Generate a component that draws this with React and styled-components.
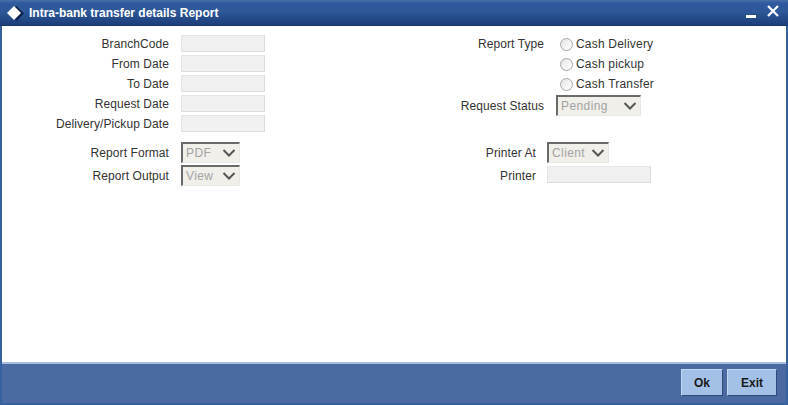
import React from "react";
import styled, { createGlobalStyle } from "styled-components";

const GlobalStyle = createGlobalStyle`
  html, body {
    margin: 0;
    padding: 0;
    background: #fff;
  }
  body {
    font-family: "Liberation Sans", Arial, sans-serif;
    font-size: 12px;
    color: #333;
  }
`;

const App = () => {
  return (
    <>
      <GlobalStyle />
      <Window>
        <TitleBar>
          <TitleIcon viewBox="0 0 20 18">
            <path d="M10.5 1 L18 8.5 L10.5 16 L3 8.5 Z" fill="#0d2350" />
            <path d="M8 1 L15 8 L8 15 L1 8 Z" fill="#fff" />
          </TitleIcon>
          <Title>Intra-bank transfer details Report</Title>
          <WindowControls>
            <svg width="10" height="4" viewBox="0 0 10 4">
              <rect width="10" height="3" y="1" fill="#fff" />
            </svg>
            <svg width="12" height="12" viewBox="0 0 12 12">
              <path d="M1 1 L11 11 M11 1 L1 11" stroke="#fff" strokeWidth="2.2" fill="none" />
            </svg>
          </WindowControls>
        </TitleBar>

        <Content>
          <TopSection>
            <Column>
              <Row>
                <Label $width={167}>BranchCode</Label>
                <Field />
              </Row>
              <Row>
                <Label $width={167}>From Date</Label>
                <Field />
              </Row>
              <Row>
                <Label $width={167}>To Date</Label>
                <Field />
              </Row>
              <Row>
                <Label $width={167}>Request Date</Label>
                <Field />
              </Row>
              <Row>
                <Label $width={167}>Delivery/Pickup Date</Label>
                <Field />
              </Row>
            </Column>

            <RightColumn>
              <Row>
                <Label $width={144}>Report Type</Label>
                <RadioOption>
                  <Radio type="radio" name="reportType" disabled />
                  Cash Delivery
                </RadioOption>
              </Row>
              <Row>
                <Label $width={144} />
                <RadioOption>
                  <Radio type="radio" name="reportType" disabled />
                  Cash pickup
                </RadioOption>
              </Row>
              <Row>
                <Label $width={144} />
                <RadioOption>
                  <Radio type="radio" name="reportType" disabled />
                  Cash Transfer
                </RadioOption>
              </Row>
              <StatusRow>
                <Label $width={144}>Request Status</Label>
                <SelectBox $width={85}>
                  Pending
                  <Chevron />
                </SelectBox>
              </StatusRow>
            </RightColumn>
          </TopSection>

          <BottomSection>
            <Column>
              <SelectRow>
                <Label $width={167}>Report Format</Label>
                <SelectBox $width={59}>
                  PDF
                  <Chevron />
                </SelectBox>
              </SelectRow>
              <SelectRow>
                <Label $width={167}>Report Output</Label>
                <SelectBox $width={59}>
                  View
                  <Chevron />
                </SelectBox>
              </SelectRow>
            </Column>

            <PrinterColumn>
              <SelectRow>
                <Label $width={136} $gap={11}>Printer At</Label>
                <SelectBox $width={62}>
                  Client
                  <Chevron />
                </SelectBox>
              </SelectRow>
              <SelectRow>
                <Label $width={136} $gap={11}>Printer</Label>
                <PrinterField $width={104} />
              </SelectRow>
            </PrinterColumn>
          </BottomSection>
        </Content>

        <Footer>
          <FooterButton $width={42}>Ok</FooterButton>
          <FooterButton $width={50}>Exit</FooterButton>
        </Footer>
      </Window>
    </>
  );
};

const Chevron = () => (
  <ChevronIcon viewBox="0 0 14 8">
    <path d="M1.5 1 L7 6.5 L12.5 1" fill="none" stroke="#555" strokeWidth="2" />
  </ChevronIcon>
);

const Window = styled.div`
  box-sizing: border-box;
  width: 788px;
  height: 405px;
  display: flex;
  flex-direction: column;
  background: #fff;
  border-left: 2px solid #37609f;
  border-right: 2px solid #37609f;
  border-bottom: 2px solid #37609f;
`;

const TitleBar = styled.div`
  box-sizing: border-box;
  height: 26px;
  margin: 0 -2px;
  padding: 0 9px 0 6px;
  display: flex;
  align-items: center;
  background: linear-gradient(to bottom, #4a6fa8 0, #2f5a9e 3px, #2d5797 12px, #1c3d7a 25px, #12305f 26px);
`;

const TitleIcon = styled.svg`
  width: 20px;
  height: 18px;
  margin: 2px 3px 0 0;
`;

const Title = styled.div`
  flex: 1;
  color: #fff;
  font-weight: bold;
  font-size: 12px;
`;

const WindowControls = styled.div`
  display: flex;
  align-items: center;
  gap: 11px;

  svg:first-child {
    margin-top: 5px;
  }
  svg:last-child {
    margin-top: -5px;
  }
`;

const Content = styled.div`
  flex: 1;
  padding-top: 8px;
`;

const TopSection = styled.div`
  display: flex;
`;

const Column = styled.div`
  display: flex;
  flex-direction: column;
  width: 398px;
`;

const RightColumn = styled(Column)`
  width: auto;
`;

const PrinterColumn = styled(Column)`
  width: auto;
`;

const BottomSection = styled.div`
  display: flex;
  margin-top: 7px;
`;

const Row = styled.div`
  display: flex;
  align-items: center;
  height: 20px;
`;

const StatusRow = styled(Row)`
  height: 21px;
  margin-top: 1px;
`;

const SelectRow = styled(Row)`
  height: 23px;
`;

const Label = styled.div`
  flex: none;
  width: ${(p) => p.$width}px;
  margin-right: ${(p) => p.$gap ?? 12}px;
  text-align: right;
  font-size: 12px;
  letter-spacing: 0.08px;
  color: #333;
`;

const Field = styled.input.attrs({ type: "text", disabled: true })`
  box-sizing: border-box;
  width: ${(p) => p.$width ?? 84}px;
  height: 17px;
  margin-top: -1px;
  padding: 0;
  background: #f0f0f0;
  border: 1px solid #e6e6e6;
  border-bottom-color: #dcdcdc;
  border-right-color: #dcdcdc;
`;

const PrinterField = styled(Field)`
  margin-top: -2px;
`;

const RadioOption = styled.label`
  display: flex;
  align-items: center;
  margin-left: 4px;
  font-size: 12px;
  letter-spacing: 0.2px;
  color: #333;
`;

const Radio = styled.input`
  appearance: none;
  box-sizing: border-box;
  width: 13px;
  height: 13px;
  margin: 1px 3px 0 0;
  border: 1px solid #a6a6a6;
  border-radius: 50%;
  background: linear-gradient(135deg, #e4e4e4, #fff);
`;

const SelectBox = styled.div`
  box-sizing: border-box;
  width: ${(p) => p.$width}px;
  height: 21px;
  padding: 0 3px;
  display: flex;
  align-items: center;
  justify-content: space-between;
  font-size: 12px;
  letter-spacing: 0.4px;
  color: #a3a3a3;
  background: #f0efea;
  border-top: 2px solid #6a6a6a;
  border-left: 2px solid #6a6a6a;
  border-right: 1px solid #e8e8e4;
  border-bottom: 1px solid #e8e8e4;
`;

const ChevronIcon = styled.svg`
  width: 14px;
  height: 8px;
`;

const Footer = styled.div`
  box-sizing: border-box;
  height: 41px;
  padding: 5px 9px 0 0;
  display: flex;
  justify-content: flex-end;
  gap: 4px;
  background: #4a6aa1;
  border-top: 2px solid #a9bfdf;
`;

const FooterButton = styled.button`
  box-sizing: border-box;
  width: ${(p) => p.$width}px;
  height: 27px;
  padding: 0;
  font-family: "Liberation Sans", Arial, sans-serif;
  font-size: 12px;
  font-weight: bold;
  color: #1a1a1a;
  background: #a3c1e6;
  border: 1px solid;
  border-color: #c2d6ef #2f4a7a #2f4a7a #c2d6ef;
`;

export default App;
